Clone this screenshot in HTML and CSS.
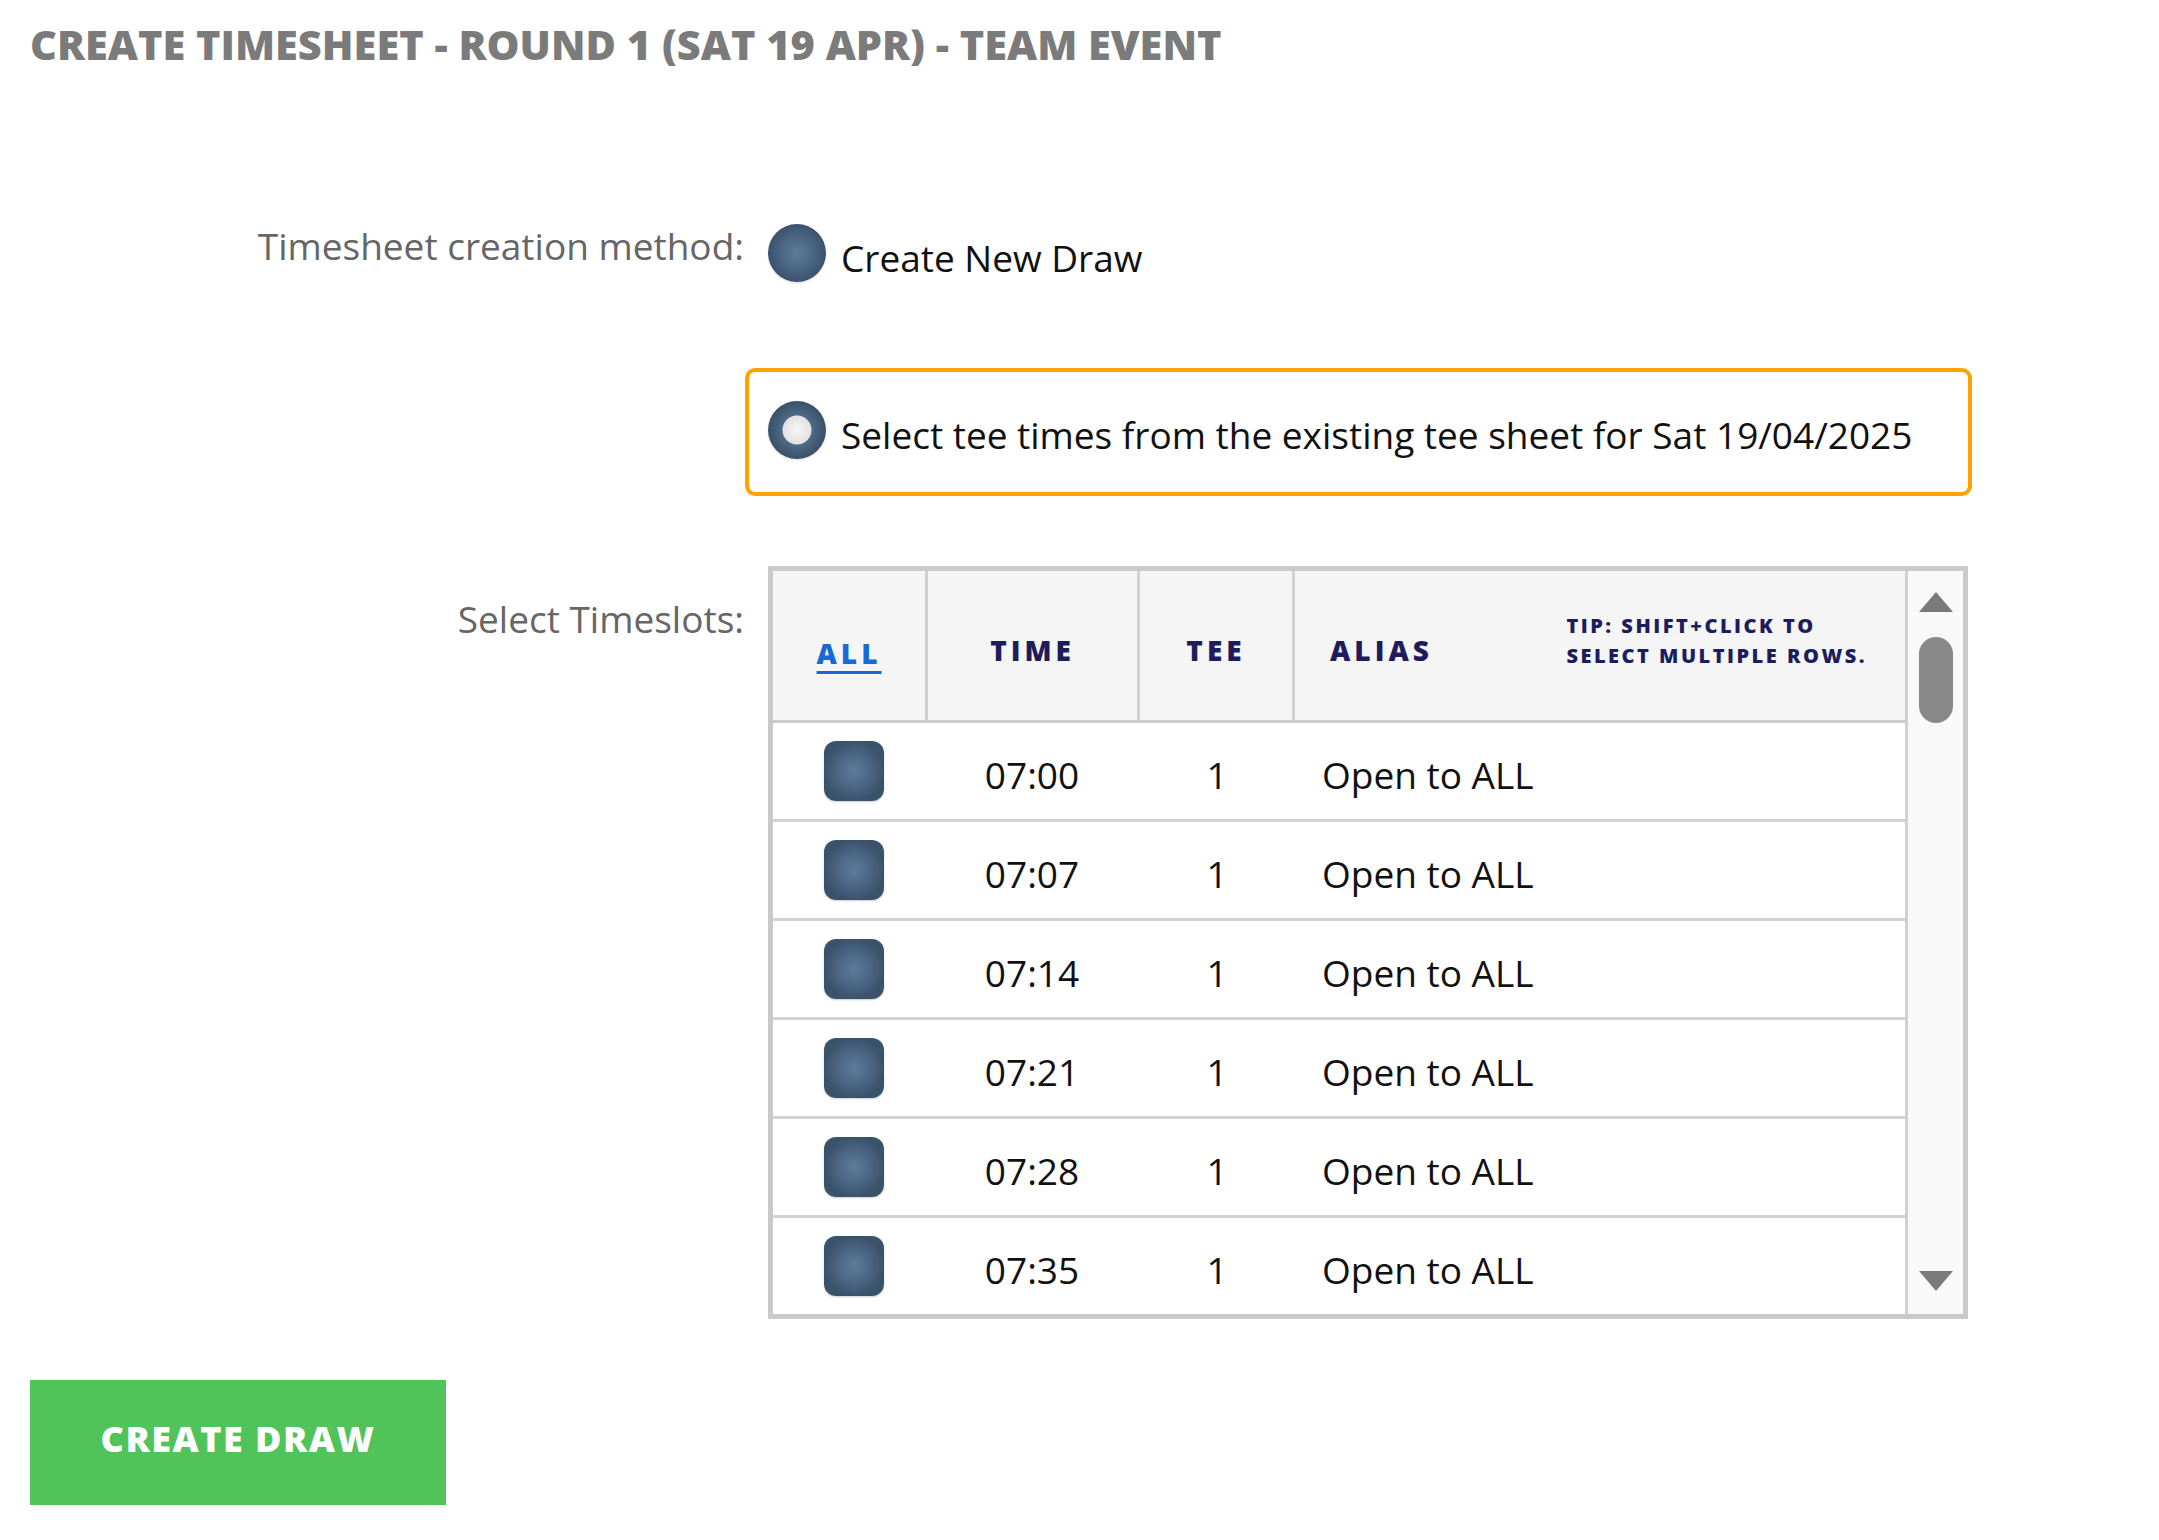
FILE: index.html
```html
<!DOCTYPE html>
<html lang="en">
<head>
<meta charset="utf-8">
<title>Create Timesheet</title>
<link rel="stylesheet" href="styles.css">
</head>
<body>
<div class="page">
  <h1 class="title">CREATE TIMESHEET - ROUND 1 (SAT 19 APR) - TEAM EVENT</h1>

  <div class="form-row method">
    <div class="label">Timesheet creation method:</div>
    <div class="options">
      <label class="option">
        <span class="radio"></span>
        <span class="option-text">Create New Draw</span>
      </label>
      <label class="option focused">
        <span class="radio empty"></span>
        <span class="option-text">Select tee times from the existing tee sheet for Sat 19/04/2025</span>
      </label>
    </div>
  </div>

  <div class="form-row slots">
    <div class="label">Select Timeslots:</div>
    <div class="table-box">
      <div class="grid-area">
        <div class="thead">
          <div class="th"><span class="all">ALL</span></div>
          <div class="th">TIME</div>
          <div class="th">TEE</div>
          <div class="th alias"><span>ALIAS</span><span class="tip">TIP: SHIFT+CLICK TO<br>SELECT MULTIPLE ROWS.</span></div>
        </div>
        <div class="trow"><div class="td"><span class="checkbox"></span></div><div class="td">07:00</div><div class="td">1</div><div class="td alias">Open to ALL</div></div>
        <div class="trow"><div class="td"><span class="checkbox"></span></div><div class="td">07:07</div><div class="td">1</div><div class="td alias">Open to ALL</div></div>
        <div class="trow"><div class="td"><span class="checkbox"></span></div><div class="td">07:14</div><div class="td">1</div><div class="td alias">Open to ALL</div></div>
        <div class="trow"><div class="td"><span class="checkbox"></span></div><div class="td">07:21</div><div class="td">1</div><div class="td alias">Open to ALL</div></div>
        <div class="trow"><div class="td"><span class="checkbox"></span></div><div class="td">07:28</div><div class="td">1</div><div class="td alias">Open to ALL</div></div>
        <div class="trow"><div class="td"><span class="checkbox"></span></div><div class="td">07:35</div><div class="td">1</div><div class="td alias">Open to ALL</div></div>
      </div>
      <div class="scrollbar">
        <span class="arrow-up"></span>
        <span class="thumb"></span>
        <span class="arrow-down"></span>
      </div>
    </div>
  </div>

  <button class="create" type="button">CREATE DRAW</button>
</div>
</body>
</html>
```

FILE: styles.css
```css
* { box-sizing: border-box; }

body {
  margin: 0;
  background: #ffffff;
  font-family: "Open Sans", "Liberation Sans", sans-serif;
}

.page {
  padding: 14px 0 30px 30px;
}

.title {
  margin: 0;
  font-size: 41.5px;
  line-height: 60px;
  font-weight: 800;
  color: #7b7b7b;
}

.form-row {
  display: grid;
  grid-template-columns: 715px auto;
  align-items: start;
}

.label {
  text-align: right;
  font-size: 37px;
  line-height: 50px;
  color: #666666;
  padding-right: 1px;
}

.method { margin-top: 117px; }
.method .label { padding-top: 30px; }

.options {
  display: flex;
  flex-direction: column;
  align-items: flex-start;
  gap: 49px;
}

.option {
  display: flex;
  align-items: center;
  gap: 15px;
  height: 128px;
  padding: 0 48px 0 19px;
  border: 4px solid transparent;
  border-radius: 10px;
  font-size: 37px;
  line-height: 50px;
  color: #111111;
}

.option.focused {
  border-color: #ffa200;
  width: 1227px;
}

.option-text { padding-top: 5px; white-space: nowrap; }

.radio {
  flex: none;
  width: 58px;
  height: 58px;
  margin-top: -4px;
  border-radius: 50%;
  background: radial-gradient(circle closest-side, #5d7c9b 0%, #4a6582 60%, #3b526b 100%);
  box-shadow: 0 1px 2px rgba(0, 0, 0, 0.15);
}

.radio.empty {
  background: radial-gradient(circle closest-side, #f6f6f6 0, #e2e2e2 14px, #4e6a86 15px, #445d78 22px, #3a5069 100%);
}

.slots { margin-top: 70px; }
.slots .label { padding-top: 28px; }

.table-box {
  margin-left: 23px;
  width: 1200px;
  height: 753px;
  border: 5px solid #cacaca;
  display: flex;
  background: #ffffff;
}

.grid-area {
  flex: 1;
  overflow: hidden;
}

.thead {
  display: grid;
  grid-template-columns: 155px 212px 155px 1fr;
  height: 152px;
  background: #f5f5f5;
  border-bottom: 3px solid #cbcbcb;
}

.th {
  display: flex;
  align-items: center;
  justify-content: center;
  border-right: 3px solid #d0d0d0;
  font-size: 28px;
  font-weight: 800;
  letter-spacing: 4px;
  color: #1d1d5e;
  padding-top: 8px;
}

.th.alias {
  border-right: none;
  justify-content: space-between;
  padding: 0 38px 0 35px;
}

.th.alias > span:first-child { padding-top: 8px; }

.tip {
  font-size: 20px;
  line-height: 30px;
  letter-spacing: 2.5px;
  margin-top: -10px;
}

.th:first-child { padding-top: 14px; }

.all {
  color: #1769d6;
  text-decoration: underline;
  text-decoration-thickness: 3px;
  text-underline-offset: 7px;
}

.trow {
  display: grid;
  grid-template-columns: 162px 194px 176px 1fr;
  align-items: center;
  height: 99px;
  border-bottom: 3px solid #d3d3d3;
  font-size: 37px;
  line-height: 50px;
  color: #111111;
}

.td { text-align: center; padding-top: 7px; }
.td:first-child { padding-top: 0; }
.td.alias { text-align: left; padding-left: 17px; }

.checkbox {
  display: block;
  margin: 0 auto;
  width: 60px;
  height: 60px;
  border-radius: 12px;
  background: radial-gradient(circle closest-side, #5d7c9b 0%, #4a6582 60%, #3b526b 100%);
  box-shadow: 0 1px 2px rgba(0, 0, 0, 0.2);
}

.scrollbar {
  width: 58px;
  flex: none;
  border-left: 3px solid #d0d0d0;
  background: #f9f9f9;
  display: flex;
  flex-direction: column;
  align-items: center;
  padding: 21px 0 23px;
}

.arrow-up {
  width: 0;
  height: 0;
  border-left: 17px solid transparent;
  border-right: 17px solid transparent;
  border-bottom: 20px solid #7a7a7a;
}

.thumb {
  width: 34px;
  height: 86px;
  margin-top: 25px;
  border-radius: 17px;
  background: #888888;
}

.arrow-down {
  margin-top: auto;
  width: 0;
  height: 0;
  border-left: 17px solid transparent;
  border-right: 17px solid transparent;
  border-top: 20px solid #7a7a7a;
}

.create {
  display: block;
  margin-top: 61px;
  width: 416px;
  height: 125px;
  padding: 0 0 8px;
  border: none;
  background: #50c35a;
  color: #ffffff;
  font-family: "Open Sans", "Liberation Sans", sans-serif;
  font-size: 36px;
  font-weight: 800;
  letter-spacing: 1.5px;
}
```
